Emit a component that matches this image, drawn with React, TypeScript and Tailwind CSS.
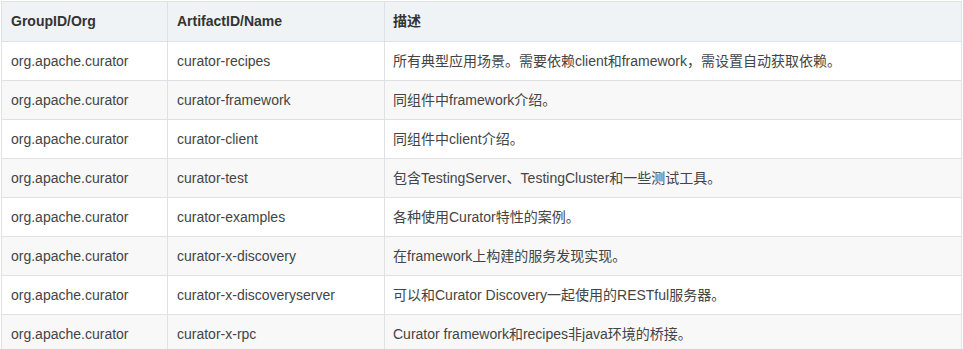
import React from 'react';

const rows = [
  ['org.apache.curator', 'curator-recipes', '所有典型应用场景。需要依赖client和framework，需设置自动获取依赖。'],
  ['org.apache.curator', 'curator-framework', '同组件中framework介绍。'],
  ['org.apache.curator', 'curator-client', '同组件中client介绍。'],
  ['org.apache.curator', 'curator-test', '包含TestingServer、TestingCluster和一些测试工具。'],
  ['org.apache.curator', 'curator-examples', '各种使用Curator特性的案例。'],
  ['org.apache.curator', 'curator-x-discovery', '在framework上构建的服务发现实现。'],
  ['org.apache.curator', 'curator-x-discoveryserver', '可以和Curator Discovery一起使用的RESTful服务器。'],
  ['org.apache.curator', 'curator-x-rpc', 'Curator framework和recipes非java环境的桥接。'],
];

export default function App() {
  return (
    <div className="bg-white h-[349px] overflow-hidden pl-[1px] pt-[1px] font-['Liberation_Sans','Noto_Sans_CJK_SC',sans-serif] text-[14px] text-[#444]">
      <table className="table-fixed border-collapse w-[961px]">
        <colgroup>
          <col className="w-[166px]" />
          <col className="w-[217px]" />
          <col className="w-[577px]" />
        </colgroup>
        <thead>
          <tr className="h-[40px] bg-[#eff3f5] text-[#333]">
            <th className="border border-[#dfe2e5] px-[9px] text-left font-bold">GroupID/Org</th>
            <th className="border border-[#dfe2e5] px-[9px] text-left font-bold">ArtifactID/Name</th>
            <th className="border border-[#dfe2e5] px-[8px] text-left font-bold">描述</th>
          </tr>
        </thead>
        <tbody>
          {rows.map((r, i) => (
            <tr key={r[1]} className={i % 2 === 1 ? 'h-[39px] bg-[#f8f8f8]' : 'h-[39px] bg-white'}>
              <td className="border border-[#dfe2e5] px-[9px]">{r[0]}</td>
              <td className="border border-[#dfe2e5] px-[9px]">{r[1]}</td>
              <td className="border border-[#dfe2e5] px-[8px]">{r[2]}</td>
            </tr>
          ))}
        </tbody>
      </table>
    </div>
  );
}
